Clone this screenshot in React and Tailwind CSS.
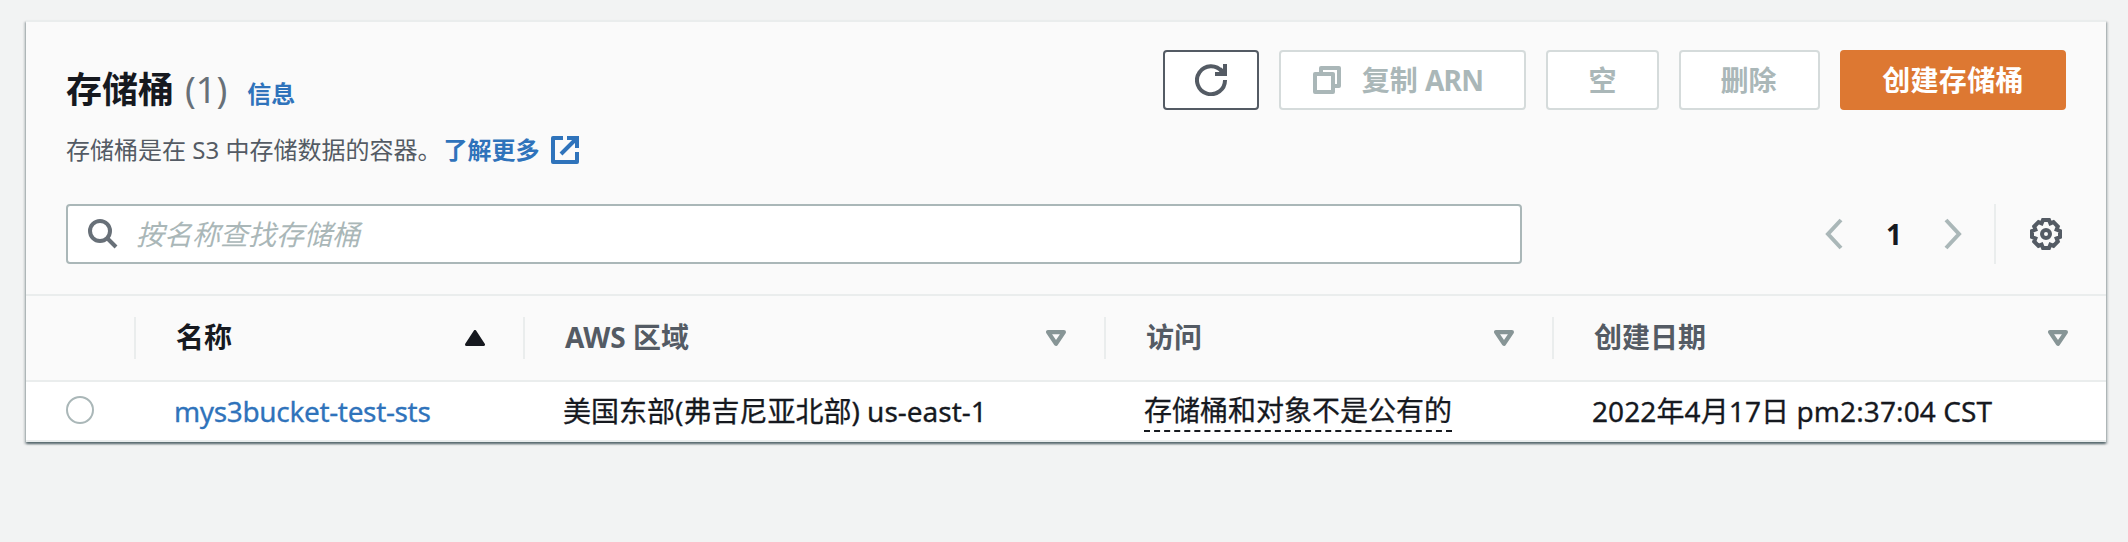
const columns = [
  { label: '名称', width: 'w-[389px]', sorted: true },
  { label: 'AWS 区域', width: 'w-[581px]' },
  { label: '访问', width: 'w-[448px]' },
  { label: '创建日期', width: 'flex-1', last: true },
];

function Icon({ className, children }) {
  return (
    <svg viewBox="0 0 32 32" fill="none" stroke="currentColor" strokeWidth="4" className={`size-8 shrink-0 ${className}`}>
      {children}
    </svg>
  );
}

function Button({ className, children }) {
  return (
    <button className={`flex h-[60px] items-center justify-center rounded-[4px] border-2 text-[28px] font-bold leading-none whitespace-nowrap ${className}`}>
      {children}
    </button>
  );
}

const disabled = 'border-[#d5dbdb] bg-white text-[#aab7b8]';

function SortIcon({ sorted }) {
  return (
    <svg viewBox="0 0 20 16" className="h-4 w-5" strokeLinejoin="round">
      {sorted ? (
        <path d="M10 1.5 18.5 14.5H1.5Z" fill="#16191f" stroke="#16191f" strokeWidth="3" />
      ) : (
        <path d="M2.1 2.1h15.8L10 13.8Z" fill="none" stroke="#879596" strokeWidth="4.2" />
      )}
    </svg>
  );
}

export default function App() {
  return (
    <div className="h-[542px] w-[2128px] bg-[#f2f3f3] pl-[26px] pt-[20px] font-['Noto_Sans','Noto_Sans_CJK_SC',sans-serif] text-[#16191f]">
      <div className="flex h-[422px] w-[2080px] flex-col border-t-2 border-[#eaeded] bg-white shadow-[0_2px_2px_0_rgba(0,28,36,0.5),2px_2px_2px_0_rgba(0,28,36,0.15),-2px_2px_2px_0_rgba(0,28,36,0.15)]">
        <div className="h-[274px] border-b-2 border-[#eaeded] bg-[#fafafa] px-10 pt-7">
          <div className="flex items-start justify-between">
            <div className="pt-[17px]">
              <h2 className="flex h-[46px] items-baseline text-[36px] leading-[46px]">
                <span className="font-bold">存储桶</span>
                <span className="ml-[11px] text-[#687078]">(1)</span>
                <a className="ml-[20px] text-[24px] font-bold text-[#2f73bb]">信息</a>
              </h2>
              <p className="mt-[19px] flex h-[36px] items-center text-[24px] leading-[36px] text-[#545b64]">
                <span>存储桶是在 S3 中存储数据的容器。</span>
                <a className="ml-[2px] flex items-center font-bold text-[#2f73bb]">
                  了解更多
                  <svg viewBox="0 0 28 28" className="ml-[12px] size-7" fill="none" stroke="currentColor" strokeWidth="4">
                    <path d="M12 2H2v24h24V16" strokeLinejoin="round" />
                    <path d="M16 2h10v10M26 2 10 18" />
                  </svg>
                </a>
              </p>
            </div>
            <div className="flex gap-5">
              <Button className="w-[96px] border-[#545b64] bg-white text-[#545b64]">
                <Icon>
                  <path d="M30 16A14 14 0 1 1 27 7.5" />
                  <path d="M30 0v10H20M25 5l5 5" />
                </Icon>
              </Button>
              <Button className={`w-[247px] pr-[9px] ${disabled}`}>
                <svg viewBox="0 0 28 28" className="mr-[21px] size-7" fill="none" stroke="currentColor" strokeWidth="4" strokeLinejoin="round">
                  <path d="M2 8h18v18H2ZM8 8V2h18v18h-6" />
                </svg>
                <span>复制 <span className="tracking-[-0.7px]">ARN</span></span>
              </Button>
              <Button className={`w-[113px] ${disabled}`}>空</Button>
              <Button className={`w-[141px] pr-[2px] ${disabled}`}>删除</Button>
              <Button className="w-[226px] border-[#dd7832] bg-[#dd7832] tracking-[0.3px] text-white">创建存储桶</Button>
            </div>
          </div>

          <div className="mt-[36px] flex items-center">
            <div className="flex h-[60px] w-[1456px] items-center rounded-[4px] border-2 border-[#aab7b8] bg-white pl-[20px] text-[28px] leading-none">
              <Icon className="text-[#687078]">
                <circle cx="12" cy="13" r="10" />
                <path d="m19 20 9 9" />
              </Icon>
              <span className="ml-[16px] italic text-[#aab7b8]">按名称查找存储桶</span>
            </div>
            <Icon className="ml-[297px] text-[#aab7b8]">
              <path d="M22 2 9 16l13 14" />
            </Icon>
            <span className="w-[86px] text-center text-[28px] font-bold leading-none">1</span>
            <Icon className="text-[#aab7b8]">
              <path d="m9 2 13 14L9 30" />
            </Icon>
            <div className="ml-[25px] h-[60px] w-[2px] bg-[#eaeded]" />
            <Icon className="ml-[34px] text-[#545b64]">
              <path d="M13 2h6l1.4 3.4 3.1-1.2 4.3 4.3-1.2 3.1L30 13v6l-3.4 1.4 1.2 3.1-4.3 4.3-3.1-1.2L19 30h-6l-1.4-3.4-3.1 1.2-4.3-4.3 1.2-3.1L2 19v-6l3.4-1.4-1.2-3.1 4.3-4.3 3.1 1.2Z" />
              <circle cx="16" cy="16" r="4" />
            </Icon>
          </div>
        </div>

        <div className="flex h-[86px] items-center border-b-2 border-[#eaeded] bg-[#fafafa] text-[28px] font-bold">
          <div className="h-[42px] w-[110px] border-r-2 border-[#eaeded]" />
          {columns.map((c) => (
            <div
              key={c.label}
              className={`flex h-[42px] items-center justify-between pl-[40px] leading-none ${c.width} ${c.last ? 'pr-[38px]' : 'border-r-2 border-[#eaeded] pr-[38px]'} ${c.sorted ? '' : 'text-[#545b64]'}`}
            >
              <span className="-mt-[2px]">{c.label}</span>
              <SortIcon sorted={c.sorted} />
            </div>
          ))}
        </div>

        <div className="flex h-[60px] items-center border-b-2 border-[#eaeded] text-[28px] leading-[40px] [-webkit-text-stroke:0.3px]">
          <div className="w-[110px] pl-10">
            <div className="-mt-[2px] size-7 rounded-full border-2 border-[#aab7b8] bg-white" />
          </div>
          <a className="w-[389px] pl-[38px] tracking-[-0.35px] text-[#2f73bb]">mys3bucket-test-sts</a>
          <div className="w-[581px] pl-[38px]">美国东部(弗吉尼亚北部) us-east-1</div>
          <div className="w-[448px] pl-[38px]">
            <span className="inline-block border-b-2 border-dashed border-[#16191f]">存储桶和对象不是公有的</span>
          </div>
          <div className="flex-1 pl-[38px] tracking-[0.1px]">2022年4月17日 pm2:37:04 CST</div>
        </div>
      </div>
    </div>
  );
}
